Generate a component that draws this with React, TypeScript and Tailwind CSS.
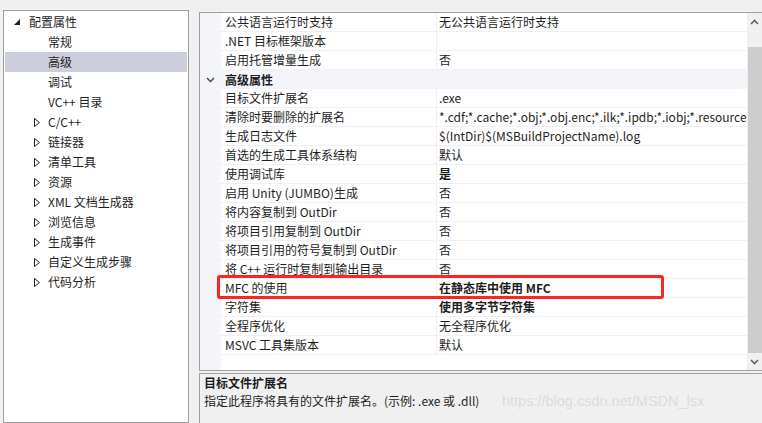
import React from "react";

const font = "font-['Microsoft_YaHei_UI','Noto_Sans_CJK_SC','Noto_Sans',sans-serif]";

function ExpandedTri() {
  return (
    <svg width="6" height="6" viewBox="0 0 6 6" className="block">
      <polygon points="6,0 6,6 0,6" fill="#1e1e1e" />
    </svg>
  );
}
function CollapsedTri() {
  return (
    <svg width="6" height="9" viewBox="0 0 6 9" className="block">
      <polygon points="0.5,0.5 5.5,4.5 0.5,8.5" fill="none" stroke="#1e1e1e" strokeWidth="1" />
    </svg>
  );
}

const treeChildren = ["常规", "高级", "调试", "VC++ 目录"];
const treeCollapsed = [
  "C/C++",
  "链接器",
  "清单工具",
  "资源",
  "XML 文档生成器",
  "浏览信息",
  "生成事件",
  "自定义生成步骤",
  "代码分析",
];

type Row = { name: string; value: string; bold?: boolean; cat?: boolean };
const rows: Row[] = [
  { name: "公共语言运行时支持", value: "无公共语言运行时支持" },
  { name: ".NET 目标框架版本", value: "" },
  { name: "启用托管增量生成", value: "否" },
  { name: "高级属性", value: "", cat: true },
  { name: "目标文件扩展名", value: ".exe" },
  { name: "清除时要删除的扩展名", value: "*.cdf;*.cache;*.obj;*.obj.enc;*.ilk;*.ipdb;*.iobj;*.resources;*.tlb" },
  { name: "生成日志文件", value: "$(IntDir)$(MSBuildProjectName).log" },
  { name: "首选的生成工具体系结构", value: "默认" },
  { name: "使用调试库", value: "是", bold: true },
  { name: "启用 Unity (JUMBO)生成", value: "否" },
  { name: "将内容复制到 OutDir", value: "否" },
  { name: "将项目引用复制到 OutDir", value: "否" },
  { name: "将项目引用的符号复制到 OutDir", value: "否" },
  { name: "将 C++ 运行时复制到输出目录", value: "否" },
  { name: "MFC 的使用", value: "在静态库中使用 MFC", bold: true },
  { name: "字符集", value: "使用多字节字符集", bold: true },
  { name: "全程序优化", value: "无全程序优化" },
  { name: "MSVC 工具集版本", value: "默认" },
];

export default function App() {
  return (
    <div className={`relative w-[762px] h-[423px] bg-[#f0f0f0] flex overflow-hidden text-[12px] text-[#1e1e1e] ${font}`}>
      {/* Left tree */}
      <div className="ml-[3px] mt-[10px] w-[186px] h-[413px] border border-[#a0a0a0] bg-white pt-px px-px shrink-0">
        <div className="h-[20px] flex items-center">
          <div className="w-[24px] pl-[9px] flex items-center">
            <ExpandedTri />
          </div>
          <span className="leading-[20px]">配置属性</span>
        </div>
        {treeChildren.map((t) => (
          <div
            key={t}
            className={`h-[20px] flex items-center pl-[43px] leading-[20px] ${t === "高级" ? "bg-[#cccedb]" : ""}`}
          >
            {t}
          </div>
        ))}
        {treeCollapsed.map((t) => (
          <div key={t} className="h-[20px] flex items-center">
            <div className="w-[43px] pl-[29px] flex items-center">
              <CollapsedTri />
            </div>
            <span className="leading-[20px]">{t}</span>
          </div>
        ))}
      </div>

      {/* Right side */}
      <div className="ml-[10px] mt-[12px] flex-1 flex flex-col min-w-0">
        <div className="h-[359px] border-l border-t border-b border-[#a0a0a0] flex bg-white shrink-0">
          <div className="flex-1 flex flex-col min-w-0">
            {rows.map((r) =>
              r.cat ? (
                <div key={r.name} className="h-[19px] flex bg-[#f3f5f9]">
                  <div className="w-[21px] flex items-center justify-center">
                    <svg width="9" height="6" viewBox="0 0 9 6">
                      <polyline points="1,1 4.5,4.5 8,1" fill="none" stroke="#444" strokeWidth="1.4" />
                    </svg>
                  </div>
                  <div className="pl-[4px] font-bold leading-[19px]">{r.name}</div>
                </div>
              ) : (
                <div key={r.name} className="h-[19px] flex">
                  <div className="w-[21px] bg-[#f3f5f9] shrink-0" />
                  <div className="w-[216px] shrink-0 border-b border-r border-[#eef0f5] pl-[4px] leading-[18px] whitespace-nowrap overflow-hidden">
                    {r.name}
                  </div>
                  <div
                    className={`flex-1 min-w-0 border-b border-[#eef0f5] pl-[2px] leading-[18px] whitespace-nowrap overflow-hidden ${r.bold ? "font-bold" : ""}`}
                  >
                    {r.value}
                  </div>
                </div>
              )
            )}
            <div className="flex-1 flex">
              <div className="w-[21px] bg-[#f3f5f9]" />
            </div>
          </div>
          {/* scrollbar */}
          <div className="w-[15px] bg-[#f0f0f0] flex flex-col shrink-0">
            <div className="h-[34px] flex justify-center pt-[6px]">
              <svg width="9" height="6" viewBox="0 0 9 6">
                <polyline points="1,5 4.5,1.5 8,5" fill="none" stroke="#606060" strokeWidth="1.6" />
              </svg>
            </div>
            <div className="flex-1 bg-[#cdcdcd] ml-px" />
            <div className="h-[17px] flex items-center justify-center">
              <svg width="9" height="6" viewBox="0 0 9 6">
                <polyline points="1,1 4.5,4.5 8,1" fill="none" stroke="#606060" strokeWidth="1.6" />
              </svg>
            </div>
          </div>
        </div>
        <div className="mt-[2px] flex-1 border-l border-t border-[#a0a0a0] pl-[4px] pt-0">
          <div className="font-bold leading-[18px]">目标文件扩展名</div>
          <div className="leading-[18px]">指定此程序将具有的文件扩展名。(示例: .exe 或 .dll)</div>
        </div>
      </div>

      {/* red highlight */}
      <div className="absolute left-[217px] top-[275px] w-[447px] h-[24px] border-[3px] border-[#ff2424] rounded-[3px]" />

      {/* watermark */}
      <div className="absolute left-[502px] top-[392px] text-[14.5px] leading-[18px] text-[#dcdcdc] font-['Liberation_Sans',sans-serif]">
        https://blog.csdn.net/MSDN_lsx
      </div>
    </div>
  );
}
